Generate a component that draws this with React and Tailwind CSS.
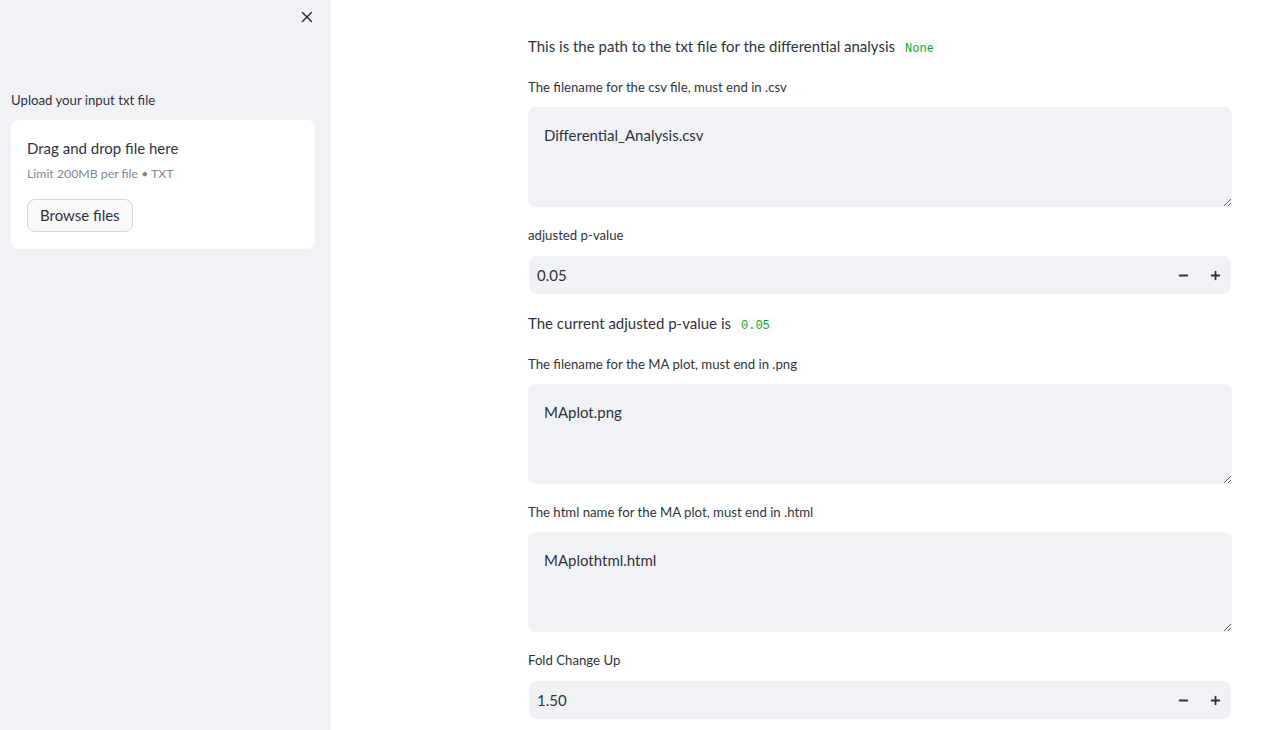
import React from 'react';
import { X, Minus, Plus } from 'lucide-react';

const font = { fontFamily: 'Lato, "Open Sans", sans-serif' };

const TextArea = ({ label, value }) => (
  <div className="flex flex-col">
    <label className="text-[13.2px] leading-[20px] mb-[10px]">{label}</label>
    <textarea
      defaultValue={value}
      className="h-[100px] w-full resize-y rounded-lg bg-[#f0f2f6] px-4 py-4 text-[15px] leading-[24px] text-[#31333f] outline-none"
    />
  </div>
);

const NumberInput = ({ label, value }) => (
  <div className="flex flex-col">
    <label className="text-[13.2px] leading-[20px] mb-[11px]">{label}</label>
    <div className="mx-px flex h-[38px] items-center rounded-lg bg-[#f0f2f6]">
      <span className="flex-1 pl-2 text-[15px]">{value}</span>
      <button className="flex h-full w-8 items-center justify-center text-[#31333f]">
        <Minus size={13} strokeWidth={3.4} />
      </button>
      <button className="flex h-full w-8 items-center justify-center text-[#31333f]">
        <Plus size={13} strokeWidth={3.4} />
      </button>
    </div>
  </div>
);

const Code = ({ children }) => (
  <code className="ml-[5px] rounded bg-[#fafafa] px-[5px] py-[2px] text-[12px] text-[#09ab3b]" style={{ fontFamily: '"Liberation Mono", monospace' }}>
    {children}
  </code>
);

export default function App() {
  return (
    <div className="flex h-[730px] w-full overflow-hidden bg-white text-[#31333f]" style={font}>
      {/* sidebar */}
      <aside className="w-[331px] shrink-0 bg-[#f0f2f6] px-[11px]">
        <div className="flex justify-end pt-[8px] pr-[4px]">
          <X size={18} strokeWidth={2} className="text-[#31333f]" />
        </div>
        <p className="mt-[64px] text-[13.2px] leading-[20px]">Upload your input txt file</p>
        <div className="mt-[10px] w-[304px] rounded-lg bg-white px-4 pt-[16px] pb-[17px]">
          <p className="text-[15px] leading-[24px]">Drag and drop file here</p>
          <p className="mt-[5px] text-[12.3px] leading-[18px] text-[#808495]">Limit 200MB per file • TXT</p>
          <button className="mt-[16px] rounded-lg border border-[#d5d6da] bg-[#fafafa] px-3 py-[5px] text-[15px] leading-[21px]">
            Browse files
          </button>
        </div>
      </aside>

      {/* main */}
      <main className="flex-1 pl-[197px]">
        <div className="w-[704px] pt-[34px] flex flex-col">
          <p className="text-[15px] leading-[24px]">
            This is the path to the txt file for the differential analysis<Code>None</Code>
          </p>
          <div className="mt-[16px]">
            <TextArea label="The filename for the csv file, must end in .csv" value="Differential_Analysis.csv" />
          </div>
          <div className="mt-[18px]">
            <NumberInput label="adjusted p-value" value="0.05" />
          </div>
          <p className="mt-[17px] text-[15px] leading-[24px]">
            The current adjusted p-value is<Code>0.05</Code>
          </p>
          <div className="mt-[16px]">
            <TextArea label="The filename for the MA plot, must end in .png" value="MAplot.png" />
          </div>
          <div className="mt-[18px]">
            <TextArea label="The html name for the MA plot, must end in .html" value="MAplothtml.html" />
          </div>
          <div className="mt-[18px]">
            <NumberInput label="Fold Change Up" value="1.50" />
          </div>
        </div>
      </main>
    </div>
  );
}
